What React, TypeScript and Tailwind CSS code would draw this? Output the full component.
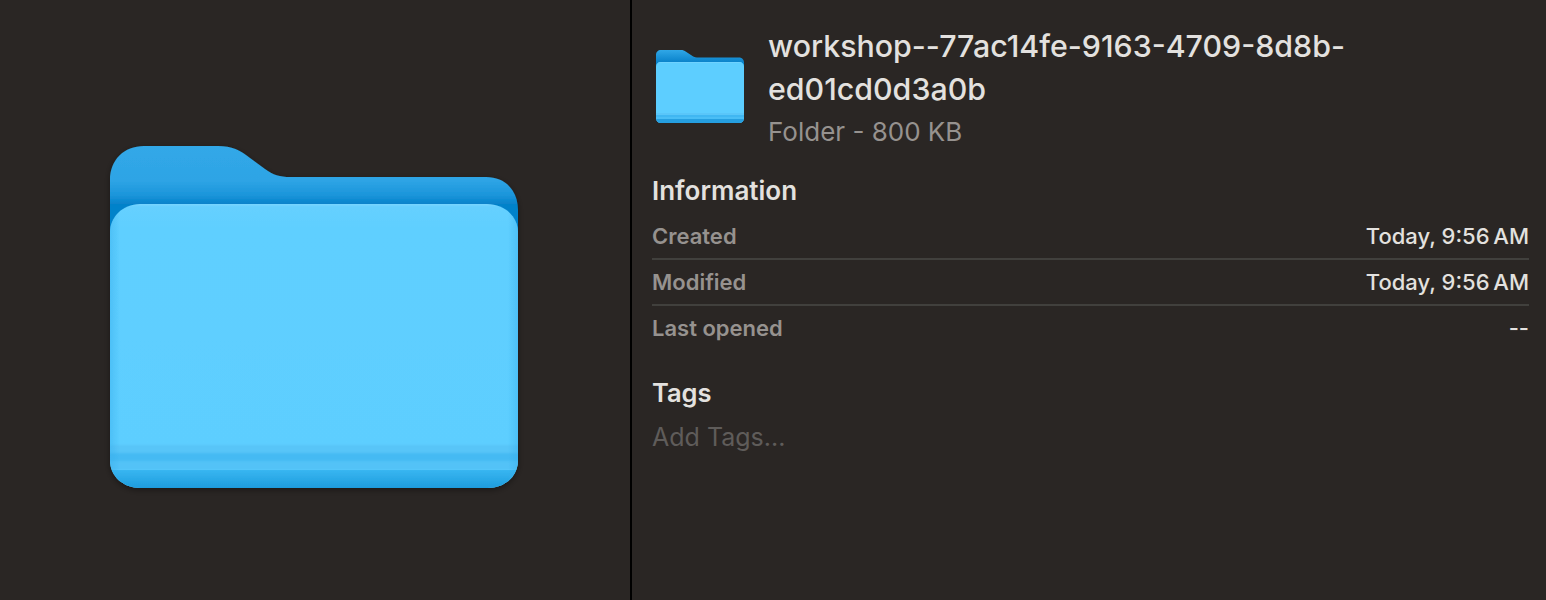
function BigFolder() {
  return (
    <svg width="428" height="363" viewBox="-10 -6 428 363" className="block">
      <defs>
        <linearGradient id="bBack" gradientUnits="userSpaceOnUse" x1="0" y1="0" x2="0" y2="58">
          <stop offset="0" stopColor="#31a8e8" />
          <stop offset="0.6" stopColor="#2ea4e5" />
          <stop offset="0.85" stopColor="#1b95da" />
          <stop offset="1" stopColor="#0682ca" />
        </linearGradient>
        <linearGradient id="bFront" gradientUnits="userSpaceOnUse" x1="0" y1="58" x2="0" y2="300">
          <stop offset="0" stopColor="#78d5ff" />
          <stop offset="0.012" stopColor="#66d0ff" />
          <stop offset="0.1" stopColor="#5fcfff" />
          <stop offset="1" stopColor="#5dceff" />
        </linearGradient>
        <linearGradient id="bBottom" x1="0" y1="0" x2="0" y2="1">
          <stop offset="0" stopColor="#38b6f1" />
          <stop offset="1" stopColor="#1e9cdd" />
        </linearGradient>
        <linearGradient id="bEdge" x1="0" y1="0" x2="1" y2="0">
          <stop offset="0" stopColor="#34abea" stopOpacity="0.4" />
          <stop offset="0.025" stopColor="#34abea" stopOpacity="0" />
          <stop offset="0.975" stopColor="#34abea" stopOpacity="0" />
          <stop offset="1" stopColor="#34abea" stopOpacity="0.4" />
        </linearGradient>
        <filter id="bShadow" x="-5%" y="-5%" width="110%" height="110%">
          <feDropShadow dx="0" dy="2" stdDeviation="3" floodColor="#000" floodOpacity="0.4" />
        </filter>
        <filter id="bSoft" x="0" y="-20%" width="100%" height="140%">
          <feGaussianBlur stdDeviation="0 1" />
        </filter>
        <clipPath id="bClip">
          <path d="M0 86C0 72 12 58 30 58H377C396 58 408 72 408 86V314C408 331 394 342 378 342H30C14 342 0 331 0 314Z" />
        </clipPath>
      </defs>
      <g filter="url(#bShadow)">
        <path
          d="M0 34C0 14 14 0 34 0H108C122 0 130 4 140 12L155 23C163 29 170 31 180 31H376C396 31 408 45 408 64V300H0Z"
          fill="url(#bBack)"
        />
        <g clipPath="url(#bClip)">
          <rect x="0" y="58" width="408" height="284" fill="url(#bFront)" />
          <g filter="url(#bSoft)">
            <rect x="0" y="299" width="408" height="8" fill="#58c5f8" />
            <rect x="0" y="307" width="408" height="8" fill="#44baf3" />
            <rect x="0" y="315" width="408" height="9" fill="#52c2f7" />
          </g>
          <rect x="0" y="324" width="408" height="18" fill="url(#bBottom)" />
          <rect x="0" y="58" width="408" height="284" fill="url(#bEdge)" />
        </g>
      </g>
    </svg>
  );
}

function SmallFolder() {
  return (
    <svg width="88" height="74" viewBox="0 0 88 74" className="block">
      <defs>
        <linearGradient id="sBack" gradientUnits="userSpaceOnUse" x1="0" y1="0" x2="0" y2="12">
          <stop offset="0" stopColor="#30a7e7" />
          <stop offset="1" stopColor="#0a83cb" />
        </linearGradient>
        <clipPath id="sClip">
          <path d="M0 16.5C0 13.5 2 12 5 12H83C86 12 88 13.5 88 16.5V68C88 71 86 73 83 73H5C2 73 0 71 0 68Z" />
        </clipPath>
      </defs>
      <path
        d="M0 5C0 2 2 0 5 0H25C27 0 28.5 .6 30 1.7L35 5C37 6.6 38.5 7.4 41 7.4H83C86 7.4 88 9.5 88 12.5V60H0Z"
        fill="url(#sBack)"
      />
      <g clipPath="url(#sClip)">
        <rect x="0" y="12" width="88" height="61" fill="#5dceff" />
        <rect x="0" y="12" width="88" height="0.7" fill="#78d5ff" />
        <rect x="0" y="63" width="88" height="2" fill="#5ac6f9" />
        <rect x="0" y="65" width="88" height="2" fill="#40b7f2" />
        <rect x="0" y="67" width="88" height="2" fill="#4abef5" />
        <rect x="0" y="69" width="88" height="4" fill="#259fe0" />
      </g>
    </svg>
  );
}

function Row({ label, value, className }: { label: string; value: string; className: string }) {
  return (
    <div className={`flex items-center justify-between ${className}`}>
      <span className="text-[22px] font-semibold text-[#96928f]">{label}</span>
      <span className="text-[22px] font-medium text-[#e3e1df]">{value}</span>
    </div>
  );
}

export default function App() {
  return (
    <div className="flex h-[600px] w-[1546px] overflow-hidden bg-[#2a2624] font-['Inter',sans-serif]">
      <div className="flex w-[630px] justify-center pr-[2px] pt-[140px]">
        <BigFolder />
      </div>
      <div className="w-[2px] bg-black" />
      <div className="flex-1 pl-[20px] pr-[17px] pt-[25px]">
        <div className="flex">
          <div className="ml-[4px] mr-[24px] mt-[25px] shrink-0">
            <SmallFolder />
          </div>
          <div className="w-[640px]">
            <div className="text-[30.35px] font-medium leading-[43px] text-[#e3e1df]">
              workshop--77ac14fe-9163-4709-8d8b-
              <br />
              ed01cd0d3a0b
            </div>
            <div className="text-[26px] leading-[41px] text-[#96928f]">Folder - 800 KB</div>
          </div>
        </div>
        <div className="mt-[21px] text-[26px] font-semibold leading-[36px] text-[#e3e1df]">Information</div>
        <div className="mt-[5px]">
          <Row label="Created" value={"Today, 9:56\u202fAM"} className="h-[46px] border-b-2 border-[#41403d]" />
          <Row label="Modified" value={"Today, 9:56\u202fAM"} className="h-[46px] border-b-2 border-[#41403d]" />
          <Row label="Last opened" value="--" className="h-[44px]" />
        </div>
        <div className="mt-[25px] text-[25.5px] font-semibold leading-[36px] text-[#e3e1df]">Tags</div>
        <div className="mt-[8px] text-[25px] leading-[36px] text-[#5f5c5a]">Add Tags...</div>
      </div>
    </div>
  );
}
